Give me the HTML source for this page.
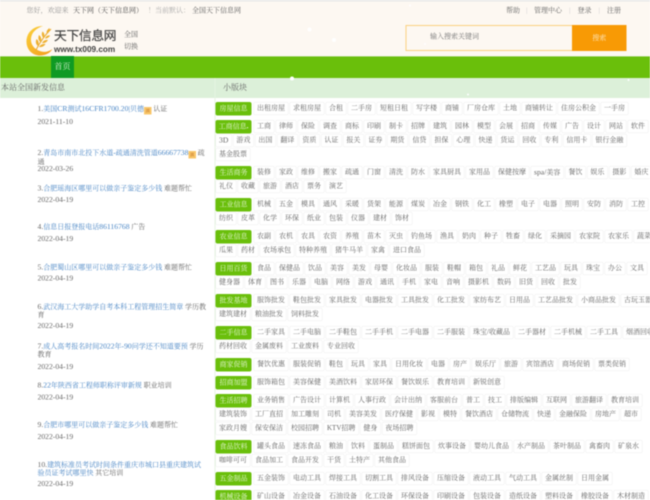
<!DOCTYPE html>
<html lang="zh"><head><meta charset="utf-8"><title>天下信息网</title>
<style>
*{box-sizing:border-box;margin:0;padding:0}
html,body{width:650px;height:500px;overflow:hidden;background:#fff}
#w{position:absolute;left:0;top:0;width:1300px;height:1000px;transform:scale(.5);transform-origin:0 0;overflow:hidden;font:14px/16px "Liberation Serif","Noto Serif CJK SC",serif;color:#666;filter:blur(.8px);background:#fff}
.a{position:absolute;white-space:nowrap}
#top{position:absolute;left:0;top:0;width:1300px;height:112px;background:#fdf8f2;border-top:3px solid #e8e8e8}
#nav{position:absolute;left:0;top:112px;width:1300px;height:44px;background:#6abf0b;border-top:1px solid #d8e8c8}
#home{position:absolute;left:102px;top:112px;width:46px;height:44px;background:#0f9a23;color:#dff3d8;font-size:16px;line-height:44px;text-align:center}
#sub{position:absolute;left:0;top:156px;width:1300px;height:40px;background:#dcf0d9;font-size:16px;line-height:40px;color:#666}
#vl{position:absolute;left:429px;top:156px;width:2px;height:844px;background:#e6f4e2}
.li{position:absolute;left:75px;width:340px;line-height:16px;color:#666}
.li a{color:#4a86c5}
.l{font-size:15.3px}
.d{position:absolute;left:75px;color:#666;line-height:16px;font-size:15.3px}
.hot{display:inline-block;width:15px;height:15px;background:#f8c66a;color:#b9651b;font-size:8px;line-height:15px;text-align:center;vertical-align:-2px;font-style:normal}
.r{position:absolute;left:431px;width:890px}
.r b{float:left;width:72px;height:27px;margin-right:4px;border-radius:4px;background:#6abf0b;color:#e6f6d6;font-weight:normal;line-height:27px;text-align:center}
.r span{float:left;height:26px;line-height:24px;padding:0 6px;border:1px solid #eee;border-radius:3px;margin:0 2px 2px 0;color:#666;background:#fff;white-space:nowrap}
.s{position:absolute;width:4px;height:4px;border-radius:50%;background:#fff}
</style></head><body><div id="w">
<div id="top"></div>
<div class="a" style="left:53px;top:14px;color:#999">您好，欢迎来</div>
<div class="a" style="left:146px;top:14px;color:#555">天下网（天下信息网）</div>
<div class="a" style="left:296px;top:14px;color:#aaa">！当前默认：</div>
<div class="a" style="left:384px;top:14px;color:#666">全国天下信息网</div>
<div class="a" style="left:1012px;top:14px;color:#666">帮助</div>
<div class="a" style="left:1052px;top:14px;color:#ccc">|</div>
<div class="a" style="left:1068px;top:14px;color:#666">管理中心</div>
<div class="a" style="left:1138px;top:14px;color:#ccc">|</div>
<div class="a" style="left:1155px;top:14px;color:#666">登录</div>
<div class="a" style="left:1197px;top:14px;color:#ccc">|</div>
<div class="a" style="left:1214px;top:14px;color:#666">注册</div>

<svg class="a" style="left:50px;top:50px" width="60" height="62" viewBox="0 0 60 62">
<defs><linearGradient id="g" x1="0" y1="0" x2="1" y2="1"><stop offset="0" stop-color="#fbd23c"/><stop offset="1" stop-color="#f39a1c"/></linearGradient></defs>
<path d="M36 2C14 2 2 18 3 35c1 16 13 26 27 26 11 0 20-5 25-13-7 5-15 7-22 5C20 50 11 40 12 27 13 15 23 6 36 2Z" fill="url(#g)"/>
<path d="M22 50C28 38 38 22 52 8" fill="none" stroke="#eaa92e" stroke-width="2"/>
<path d="M26 42c-5-4-5-9-3-14 4 3 6 8 3 14ZM31 34c-5-4-5-9-3-14 4 3 6 8 3 14ZM37 26c-4-4-4-9-2-13 4 3 5 8 2 13ZM28 44c5 1 10-1 13-6-5-1-10 1-13 6ZM34 36c5 1 9-1 12-6-5-1-9 1-12 6ZM40 27c4 0 8-2 10-6-4-1-8 1-10 6ZM44 17c-2-4 0-7 5-11 1 5-1 9-5 11Z" fill="#eeb030"/>
</svg>
<div class="a" style="left:108px;top:57px;font:25.5px/30px 'Liberation Sans','Noto Sans CJK SC',sans-serif;color:#444;letter-spacing:-.6px;-webkit-text-stroke:.4px #444">天下信息网</div>
<div class="a" style="left:108px;top:89px;font:bold 16.4px/20px 'Liberation Sans',sans-serif;color:#444">www.tx009.com</div>
<div class="a" style="left:248px;top:58px;color:#666;line-height:24px">全国<br>切换</div>

<div class="a" style="left:811px;top:50px;width:442px;height:52px;background:#fdf8f2;border:2px solid #fbd07f"></div>
<div class="a" style="left:860px;top:66px;color:#777">输入搜索关键词</div>
<div class="a" style="left:1144px;top:50px;width:109px;height:52px;background:#f89a05;color:#fde6bd;text-align:center;line-height:54px">搜索</div>

<div id="nav"></div><div id="home">首页</div>
<div id="sub"><span class="a" style="left:2px">本站全国新发信息</span><span class="a" style="left:446px">小版块</span></div>
<div id="vl"></div>

<div class="li" style="top:210px"><span class="l">1.</span><a>美国<span class="l">CR</span>测试<span class="l">16CFR1700.20|</span>贝德</a><i class="hot">滇</i> 认证</div><div class="d" style="top:236px">2021-11-10</div>
<div class="li" style="top:298px"><span class="l">2.</span><a>青岛市南市北投下水道<span class="l">-</span>疏通清洗管道<span class="l">66667738</span></a><i class="hot">滇</i> 疏通</div><div class="d" style="top:330px">2022-03-26</div>
<div class="li" style="top:369px"><span class="l">3.</span><a>合肥瑶海区哪里可以做亲子鉴定多少钱</a> 难题帮忙</div><div class="d" style="top:392px">2022-04-19</div>
<div class="li" style="top:446px"><span class="l">4.</span><a>信息日报登报电话<span class="l">86116768</span></a> 广告</div><div class="d" style="top:470px">2022-04-19</div>
<div class="li" style="top:527px"><span class="l">5.</span><a>合肥蜀山区哪里可以做亲子鉴定多少钱</a> 难题帮忙</div><div class="d" style="top:549px">2022-04-19</div>
<div class="li" style="top:606px"><span class="l">6.</span><a>武汉海工大学助学自考本科工程管理招生简章</a> 学历教育</div><div class="d" style="top:644px">2022-04-19</div>
<div class="li" style="top:685px"><span class="l">7.</span><a>成人高考报名时间<span class="l">2022</span>年<span class="l">-90</span>问学还不知道要预</a> 学历教育</div><div class="d" style="top:726px">2022-04-19</div>
<div class="li" style="top:763px"><span class="l">8.</span><a><span class="l">22</span>年陕西省工程师职称评审新规</a> 职业培训</div><div class="d" style="top:787px">2022-04-19</div>
<div class="li" style="top:842px"><span class="l">9.</span><a>合肥市哪里可以做亲子鉴定多少钱</a> 难题帮忙</div><div class="d" style="top:866px">2022-04-19</div>
<div class="li" style="top:922px"><span class="l">10.</span><a>建筑标准员考试时间条件重庆市城口县重庆建筑试验员证考试哪里快</a> 其它培训</div><div class="d" style="top:960px">2022-04-19</div>

<div class="r" style="top:204px"><b>房屋信息</b><span>出租房屋</span><span>求租房屋</span><span>合租</span><span>二手房</span><span>短租日租</span><span>写字楼</span><span>商铺</span><span>厂房仓库</span><span>土地</span><span>商铺转让</span><span>住房公积金</span><span>一手房</span></div>
<div class="r" style="top:240px"><b>工商信息<i style="font-style:normal;font-size:6px">●</i></b><span>工商</span><span>律师</span><span>保险</span><span>调查</span><span>商标</span><span>印刷</span><span>制卡</span><span>招牌</span><span>建筑</span><span>园林</span><span>模型</span><span>会展</span><span>招商</span><span>传媒</span><span>广告</span><span>设计</span><span>网站</span><span>软件</span><span class="l">3D</span><span>游戏</span><span>出国</span><span>翻译</span><span>资质</span><span>认证</span><span>报关</span><span>证券</span><span>期货</span><span>信贷</span><span>担保</span><span>心理</span><span>快递</span><span>货运</span><span>回收</span><span>专利</span><span>信用卡</span><span>银行金融</span><span>基金股票</span></div>
<div class="r" style="top:332px"><b>生活商务</b><span>装修</span><span>家政</span><span>维修</span><span>搬家</span><span>疏通</span><span>门窗</span><span>清洗</span><span>防水</span><span>家具厨具</span><span>家用品</span><span>保健按摩</span><span><span style="float:none;padding:0;border:0;margin:0;background:none;font-size:15.3px">spa/</span>美容</span><span>餐饮</span><span>娱乐</span><span>摄影</span><span>婚庆</span><span>礼仪</span><span>收藏</span><span>旅游</span><span>酒店</span><span>票务</span><span>演艺</span></div>
<div class="r" style="top:396px"><b>工业信息</b><span>机械</span><span>五金</span><span>模具</span><span>通风</span><span>采暖</span><span>货架</span><span>能源</span><span>煤炭</span><span>冶金</span><span>钢铁</span><span>化工</span><span>橡塑</span><span>电子</span><span>电器</span><span>照明</span><span>安防</span><span>消防</span><span>工控</span><span>纺织</span><span>皮革</span><span>化学</span><span>环保</span><span>纸业</span><span>包装</span><span>仪器</span><span>建材</span><span>饰材</span></div>
<div class="r" style="top:460px"><b>农业信息</b><span>农副</span><span>农机</span><span>农具</span><span>农资</span><span>养殖</span><span>苗木</span><span>灭虫</span><span>钓鱼场</span><span>渔具</span><span>奶肉</span><span>种子</span><span>牲畜</span><span>绿化</span><span>采摘园</span><span>农家院</span><span>农家乐</span><span>蔬菜</span><span>瓜果</span><span>药材</span><span>农场承包</span><span>特种养殖</span><span>猪牛马羊</span><span>家禽</span><span>进口食品</span></div>
<div class="r" style="top:524px"><b>日用百货</b><span>食品</span><span>保健品</span><span>饮品</span><span>美容</span><span>美发</span><span>母婴</span><span>化妆品</span><span>服装</span><span>鞋帽</span><span>箱包</span><span>礼品</span><span>鲜花</span><span>工艺品</span><span>玩具</span><span>珠宝</span><span>办公</span><span>文具</span><span>健身器</span><span>体育</span><span>图书</span><span>乐器</span><span>电脑</span><span>网络</span><span>游戏</span><span>通讯</span><span>手机</span><span>家电</span><span>音响</span><span>摄影机</span><span>数码</span><span>旧货</span><span>回收</span><span>批发</span></div>
<div class="r" style="top:588px"><b>批发基地</b><span>服饰批发</span><span>鞋包批发</span><span>家具批发</span><span>电器批发</span><span>工具批发</span><span>化工批发</span><span>家纺布艺</span><span>日用品</span><span>工艺品批发</span><span>小商品批发</span><span>古玩玉器</span><span>建筑建材</span><span>粮油批发</span><span>饲料批发</span></div>
<div class="r" style="top:652px"><b>二手信息</b><span>二手家具</span><span>二手电脑</span><span>二手鞋包</span><span>二手手机</span><span>二手电器</span><span>二手服装</span><span>珠宝/收藏品</span><span>二手器材</span><span>二手机械</span><span>二手工具</span><span>烟酒回收</span><span>药材回收</span><span>金属废料</span><span>工业废料</span><span>专业回收</span></div>
<div class="r" style="top:716px"><b>商家促销</b><span>餐饮优惠</span><span>服装促销</span><span>鞋包</span><span>玩具</span><span>家具</span><span>日用化妆</span><span>电器</span><span>房产</span><span>娱乐厅</span><span>旅游</span><span>宾馆酒店</span><span>商场促销</span><span>票类促销</span></div>
<div class="r" style="top:752px"><b>招商加盟</b><span>服饰箱包</span><span>美容保健</span><span>美酒饮料</span><span>家居环保</span><span>餐饮娱乐</span><span>教育培训</span><span>新锐创意</span></div>
<div class="r" style="top:788px"><b>生活招聘</b><span>业务销售</span><span>广告设计</span><span>计算机</span><span>人事行政</span><span>会计出纳</span><span>客服前台</span><span>普工</span><span>技工</span><span>排版编辑</span><span>互联网</span><span>旅游翻译</span><span>教育培训</span><span>建筑装饰</span><span>工厂直招</span><span>加工雕刻</span><span>司机</span><span>美容美发</span><span>医疗保健</span><span>影视</span><span>模特</span><span>餐饮酒店</span><span>仓储物流</span><span>快递</span><span>金融保险</span><span>房地产</span><span>超市</span><span>家政月嫂</span><span>保安保洁</span><span>校园招聘</span><span>KTV招聘</span><span>健身</span><span>夜场招聘</span></div>
<div class="r" style="top:880px"><b>食品饮料</b><span>罐头食品</span><span>速冻食品</span><span>粮油</span><span>饮料</span><span>蛋制品</span><span>糕饼面包</span><span>炊事设备</span><span>婴幼儿食品</span><span>水产制品</span><span>茶叶制品</span><span>禽畜肉</span><span>矿泉水</span><span>咖啡可可</span><span>食品加工</span><span>食品开发</span><span>干货</span><span>土特产</span><span>其他食品</span></div>
<div class="r" style="top:944px"><b>五金制品</b><span>五金装饰</span><span>电动工具</span><span>焊接工具</span><span>切割工具</span><span>排风设备</span><span>压缩设备</span><span>液动工具</span><span>气动工具</span><span>金属丝制</span><span>日用金属</span></div>
<div class="r" style="top:980px"><b>机械设备</b><span>矿山设备</span><span>冶金设备</span><span>石油设备</span><span>化工设备</span><span>环保设备</span><span>印刷设备</span><span>包装设备</span><span>造纸设备</span><span>塑料设备</span><span>橡胶设备</span><span>木材制造</span></div>

<i class="s" style="left:615px;top:55px;width:8px;height:8px"></i>
<i class="s" style="left:580px;top:153px;width:8px;height:8px"></i>
<i class="s" style="left:664px;top:76px;width:8px;height:8px"></i>
<i class="s" style="left:848px;top:86px"></i>
<i class="s" style="left:934px;top:187px"></i>
<i class="s" style="left:818px;top:9px"></i>
<i class="s" style="left:1255px;top:158px"></i>
</div></body></html>
